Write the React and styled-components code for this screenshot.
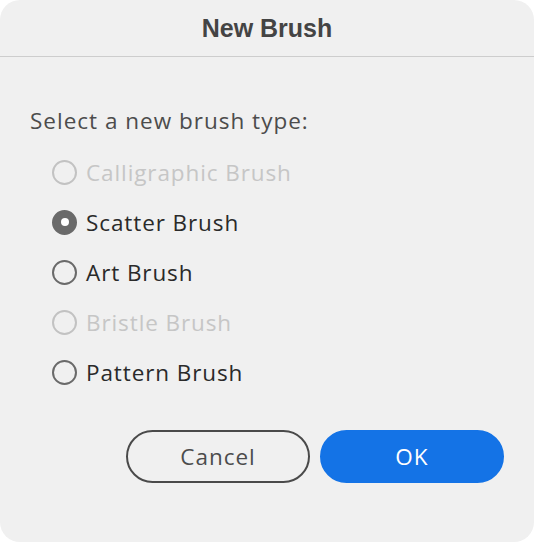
import React, { useState } from 'react';
import styled, { createGlobalStyle, css } from 'styled-components';

const GlobalStyle = createGlobalStyle`
    html, body {
        margin: 0;
        padding: 0;
        background: #ffffff;
    }
    * {
        box-sizing: border-box;
    }
`;

const Dialog = styled.div`
    width: 534px;
    height: 542px;
    background: #f0f0f0;
    border-radius: 20px;
    display: flex;
    flex-direction: column;
    overflow: hidden;
    font-family: "Open Sans", "Noto Sans", sans-serif;
`;

const TitleBar = styled.div`
    height: 57px;
    border-bottom: 1px solid #cdcdcd;
    display: flex;
    align-items: center;
    justify-content: center;
    padding-top: 1px;
`;

const Title = styled.h1`
    margin: 0;
    font-family: "Liberation Sans", Arial, sans-serif;
    font-weight: 700;
    font-size: 25px;
    color: #444444;
`;

const Body = styled.div`
    display: flex;
    flex-direction: column;
    padding: 49px 30px 0 30px;
`;

const Prompt = styled.div`
    font-size: 22.5px;
    font-weight: 500;
    letter-spacing: 1px;
    line-height: 30px;
    color: #4c4c4c;
    margin-bottom: 11px;
`;

const OptionList = styled.div`
    display: flex;
    flex-direction: column;
    padding-left: 22px;
`;

const Option = styled.label`
    height: 50px;
    display: flex;
    align-items: center;
    gap: 9px;
    font-size: 22.5px;
    font-weight: 500;
    letter-spacing: 0.9px;
    color: ${(p) => (p.disabled ? '#c6c6c6' : '#2a2a2a')};
    cursor: ${(p) => (p.disabled ? 'default' : 'pointer')};
`;

const Radio = styled.span`
    width: 25px;
    height: 25px;
    border-radius: 50%;
    flex-shrink: 0;
    border: 2px solid ${(p) => (p.disabled ? '#c2c2c2' : '#6a6a6a')};
    display: flex;
    align-items: center;
    justify-content: center;
    ${(p) =>
        p.checked &&
        css`
            background: #6a6a6a;
            &::after {
                content: '';
                width: 8px;
                height: 8px;
                border-radius: 50%;
                background: #ffffff;
            }
        `}
`;

const Footer = styled.div`
    display: flex;
    justify-content: flex-end;
    gap: 10px;
    padding: 33px 30px 0 30px;
`;

const Button = styled.button`
    width: 184px;
    height: 53px;
    border-radius: 27px;
    font-family: "Open Sans", "Noto Sans", sans-serif;
    font-size: 22.5px;
    font-weight: 500;
    letter-spacing: 1px;
    cursor: pointer;
    border: 2px solid #4a4a4a;
    background: transparent;
    color: #4c4c4c;
    ${(p) =>
        p.primary &&
        css`
            border-color: #1473e6;
            background: #1473e6;
            color: #ffffff;
        `}
`;

const options = [
    { label: 'Calligraphic Brush', disabled: true },
    { label: 'Scatter Brush' },
    { label: 'Art Brush' },
    { label: 'Bristle Brush', disabled: true },
    { label: 'Pattern Brush' },
];

function App() {
    const [selected, setSelected] = useState('Scatter Brush');
    return (
        <>
            <GlobalStyle />
            <Dialog>
                <TitleBar>
                    <Title>New Brush</Title>
                </TitleBar>
                <Body>
                    <Prompt>Select a new brush type:</Prompt>
                    <OptionList>
                        {options.map((o) => (
                            <Option
                                key={o.label}
                                disabled={o.disabled}
                                onClick={() => !o.disabled && setSelected(o.label)}
                            >
                                <Radio disabled={o.disabled} checked={selected === o.label} />
                                {o.label}
                            </Option>
                        ))}
                    </OptionList>
                </Body>
                <Footer>
                    <Button>Cancel</Button>
                    <Button primary>OK</Button>
                </Footer>
            </Dialog>
        </>
    );
}

export default App;
